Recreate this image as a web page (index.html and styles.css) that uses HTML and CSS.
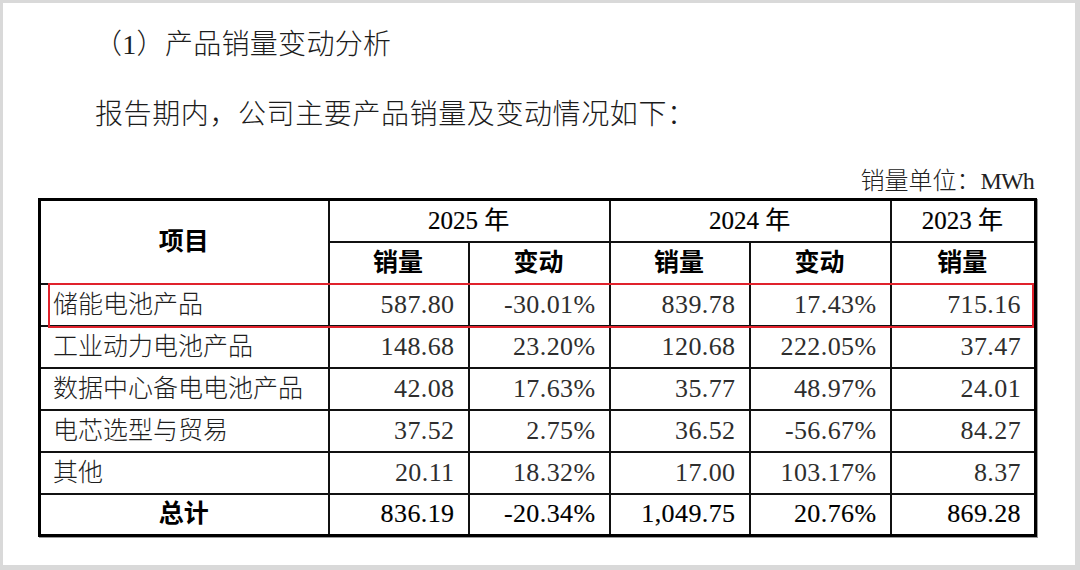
FILE: index.html
```html
<!DOCTYPE html>
<html lang="zh-CN">
<head>
<meta charset="utf-8">
<title>产品销量变动分析</title>
<link rel="stylesheet" href="styles.css">
</head>
<body>
<div class="panel">
  <h2 class="title">（1）产品销量变动分析</h2>
  <p class="lead">报告期内，公司主要产品销量及变动情况如下：</p>
  <div class="unit">销量单位：<span class="unit-code">MWh</span></div>
  <div class="table-wrap">
    <table class="sales">
      <colgroup>
        <col class="c-item"><col class="c-a"><col class="c-b"><col class="c-a"><col class="c-b"><col class="c-last">
      </colgroup>
      <thead>
        <tr>
          <th rowspan="2" class="hd">项目</th>
          <th colspan="2" class="yr">2025 年</th>
          <th colspan="2" class="yr">2024 年</th>
          <th class="yr">2023 年</th>
        </tr>
        <tr>
          <th class="hd">销量</th>
          <th class="hd">变动</th>
          <th class="hd">销量</th>
          <th class="hd">变动</th>
          <th class="hd">销量</th>
        </tr>
      </thead>
      <tbody>
        <tr><td class="label">储能电池产品</td><td>587.80</td><td>-30.01%</td><td>839.78</td><td>17.43%</td><td>715.16</td></tr>
        <tr><td class="label">工业动力电池产品</td><td>148.68</td><td>23.20%</td><td>120.68</td><td>222.05%</td><td>37.47</td></tr>
        <tr><td class="label">数据中心备电电池产品</td><td>42.08</td><td>17.63%</td><td>35.77</td><td>48.97%</td><td>24.01</td></tr>
        <tr><td class="label">电芯选型与贸易</td><td>37.52</td><td>2.75%</td><td>36.52</td><td>-56.67%</td><td>84.27</td></tr>
        <tr><td class="label">其他</td><td>20.11</td><td>18.32%</td><td>17.00</td><td>103.17%</td><td>8.37</td></tr>
        <tr class="total"><td class="label center">总计</td><td>836.19</td><td>-20.34%</td><td>1,049.75</td><td>20.76%</td><td>869.28</td></tr>
      </tbody>
    </table>
    <div class="highlight"></div>
  </div>
</div>
</body>
</html>
```

FILE: styles.css
```css
html, body {
  margin: 0;
  padding: 0;
}

body {
  background: #d9d9d9;
  width: 1080px;
  height: 570px;
  padding: 3px 5px 5px 3px;
  box-sizing: border-box;
  font-family: "Liberation Serif", "Noto Sans CJK SC", serif;
  color: #1a1a1a;
}

.panel {
  background: #ffffff;
  width: 1072px;
  height: 562px;
  box-sizing: border-box;
  padding: 22px 0 0 35px;
  display: flex;
  flex-direction: column;
  align-items: flex-start;
}

.title,
.lead {
  margin: 0;
  padding-left: 57px;
  font-size: 28px;
  line-height: 40px;
  font-weight: 300;
  color: #1c1c1c;
}

.title {
  padding-left: 56px;
  letter-spacing: 0.3px;
}

.lead {
  margin-top: 30px;
  letter-spacing: 0.6px;
}

.unit {
  margin-top: 31px;
  width: 996px;
  text-align: right;
  font-size: 24px;
  line-height: 30px;
  font-weight: 300;
  color: #222;
}

.unit-code {
  letter-spacing: -0.8px;
}

.table-wrap {
  position: relative;
  margin-top: 2px;
}

.sales {
  border-collapse: collapse;
  width: 996px;
  table-layout: fixed;
  border: 3px solid #000;
  box-shadow: 1px 1px 0 #9a9a9a;
}

.c-item { width: 289px; }
.c-a { width: 140px; }
.c-b { width: 141px; }
.c-last { width: 145px; }

.sales th,
.sales td {
  border: 2px solid #111;
  height: 42px;
  padding: 0 13px 0 12px;
  box-sizing: border-box;
  font-size: 26px;
  line-height: 30px;
  white-space: nowrap;
}

.sales th {
  text-align: center;
  color: #000;
}

.sales th.hd {
  font-size: 25px;
  font-weight: 700;
}

.sales th.yr {
  font-size: 25px;
  font-weight: 400;
  -webkit-text-stroke: 0.2px #000;
}

.sales td {
  text-align: right;
  color: #2e2e2e;
  letter-spacing: 0.4px;
}

.sales td.label {
  text-align: left;
  font-size: 25px;
  font-weight: 300;
  letter-spacing: 0;
  color: #1e1e1e;
}

.sales td.label.center {
  text-align: center;
  font-weight: 700;
  color: #000;
}

.sales tr.total td {
  color: #000;
  -webkit-text-stroke: 0.15px #000;
}

.sales tr.total td.label {
  -webkit-text-stroke: 0;
}

.highlight {
  position: absolute;
  left: 10px;
  top: 85px;
  width: 986px;
  height: 45px;
  border: 2px solid #e0222c;
  box-sizing: border-box;
  pointer-events: none;
}
```
